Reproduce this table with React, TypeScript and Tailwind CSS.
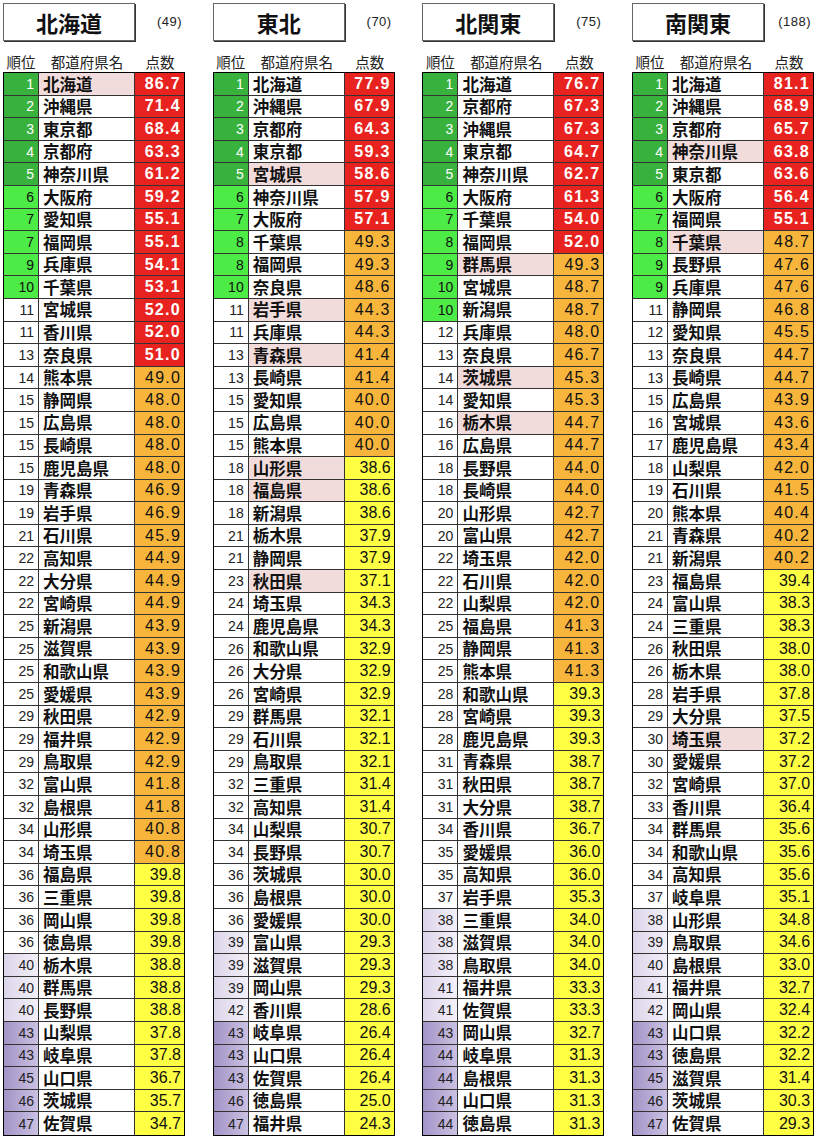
import React from 'react';

const rawData: { title: string; count: string; hl: string[]; rows: string }[] = [
  {
    title: '北海道',
    count: '(49)',
    hl: ['北海道'],
    rows: `1 北海道 86.7
2 沖縄県 71.4
3 東京都 68.4
4 京都府 63.3
5 神奈川県 61.2
6 大阪府 59.2
7 愛知県 55.1
7 福岡県 55.1
9 兵庫県 54.1
10 千葉県 53.1
11 宮城県 52.0
11 香川県 52.0
13 奈良県 51.0
14 熊本県 49.0
15 静岡県 48.0
15 広島県 48.0
15 長崎県 48.0
15 鹿児島県 48.0
19 青森県 46.9
19 岩手県 46.9
21 石川県 45.9
22 高知県 44.9
22 大分県 44.9
22 宮崎県 44.9
25 新潟県 43.9
25 滋賀県 43.9
25 和歌山県 43.9
25 愛媛県 43.9
29 秋田県 42.9
29 福井県 42.9
29 鳥取県 42.9
32 富山県 41.8
32 島根県 41.8
34 山形県 40.8
34 埼玉県 40.8
36 福島県 39.8
36 三重県 39.8
36 岡山県 39.8
36 徳島県 39.8
40 栃木県 38.8
40 群馬県 38.8
40 長野県 38.8
43 山梨県 37.8
43 岐阜県 37.8
45 山口県 36.7
46 茨城県 35.7
47 佐賀県 34.7`,
  },
  {
    title: '東北',
    count: '(70)',
    hl: ['宮城県', '岩手県', '青森県', '山形県', '福島県', '秋田県'],
    rows: `1 北海道 77.9
2 沖縄県 67.9
3 京都府 64.3
4 東京都 59.3
5 宮城県 58.6
6 神奈川県 57.9
7 大阪府 57.1
8 千葉県 49.3
8 福岡県 49.3
10 奈良県 48.6
11 岩手県 44.3
11 兵庫県 44.3
13 青森県 41.4
13 長崎県 41.4
15 愛知県 40.0
15 広島県 40.0
15 熊本県 40.0
18 山形県 38.6
18 福島県 38.6
18 新潟県 38.6
21 栃木県 37.9
21 静岡県 37.9
23 秋田県 37.1
24 埼玉県 34.3
24 鹿児島県 34.3
26 和歌山県 32.9
26 大分県 32.9
26 宮崎県 32.9
29 群馬県 32.1
29 石川県 32.1
29 鳥取県 32.1
32 三重県 31.4
32 高知県 31.4
34 山梨県 30.7
34 長野県 30.7
36 茨城県 30.0
36 島根県 30.0
36 愛媛県 30.0
39 富山県 29.3
39 滋賀県 29.3
39 岡山県 29.3
42 香川県 28.6
43 岐阜県 26.4
43 山口県 26.4
43 佐賀県 26.4
46 徳島県 25.0
47 福井県 24.3`,
  },
  {
    title: '北関東',
    count: '(75)',
    hl: ['群馬県', '茨城県', '栃木県'],
    rows: `1 北海道 76.7
2 京都府 67.3
3 沖縄県 67.3
4 東京都 64.7
5 神奈川県 62.7
6 大阪府 61.3
7 千葉県 54.0
8 福岡県 52.0
9 群馬県 49.3
10 宮城県 48.7
10 新潟県 48.7
12 兵庫県 48.0
13 奈良県 46.7
14 茨城県 45.3
14 愛知県 45.3
16 栃木県 44.7
16 広島県 44.7
18 長野県 44.0
18 長崎県 44.0
20 山形県 42.7
20 富山県 42.7
22 埼玉県 42.0
22 石川県 42.0
22 山梨県 42.0
25 福島県 41.3
25 静岡県 41.3
25 熊本県 41.3
28 和歌山県 39.3
28 宮崎県 39.3
28 鹿児島県 39.3
31 青森県 38.7
31 秋田県 38.7
31 大分県 38.7
34 香川県 36.7
35 愛媛県 36.0
35 高知県 36.0
37 岩手県 35.3
38 三重県 34.0
38 滋賀県 34.0
38 鳥取県 34.0
41 福井県 33.3
41 佐賀県 33.3
43 岡山県 32.7
44 岐阜県 31.3
44 島根県 31.3
44 山口県 31.3
44 徳島県 31.3`,
  },
  {
    title: '南関東',
    count: '(188)',
    hl: ['神奈川県', '千葉県', '埼玉県'],
    rows: `1 北海道 81.1
2 沖縄県 68.9
3 京都府 65.7
4 神奈川県 63.8
5 東京都 63.6
6 大阪府 56.4
7 福岡県 55.1
8 千葉県 48.7
9 長野県 47.6
9 兵庫県 47.6
11 静岡県 46.8
12 愛知県 45.5
13 奈良県 44.7
13 長崎県 44.7
15 広島県 43.9
16 宮城県 43.6
17 鹿児島県 43.4
18 山梨県 42.0
19 石川県 41.5
20 熊本県 40.4
21 青森県 40.2
21 新潟県 40.2
23 福島県 39.4
24 富山県 38.3
24 三重県 38.3
26 秋田県 38.0
26 栃木県 38.0
28 岩手県 37.8
29 大分県 37.5
30 埼玉県 37.2
30 愛媛県 37.2
32 宮崎県 37.0
33 香川県 36.4
34 群馬県 35.6
34 和歌山県 35.6
34 高知県 35.6
37 岐阜県 35.1
38 山形県 34.8
39 鳥取県 34.6
40 島根県 33.0
41 福井県 32.7
42 岡山県 32.4
43 山口県 32.2
43 徳島県 32.2
45 滋賀県 31.4
46 茨城県 30.3
47 佐賀県 29.3`,
  },
];

type Row = { r: number; n: string; v: string };

function parse(s: string): Row[] {
  return s
    .trim()
    .split('\n')
    .map((l) => {
      const [r, n, v] = l.trim().split(/\s+/);
      return { r: Number(r), n, v };
    });
}

function rankClass(r: number): string {
  if (r <= 5) return 'bg-[#38b23c] text-white';
  if (r <= 10) return 'bg-[#4deb45] text-[#111]';
  if (r >= 43) return 'bg-linear-to-r from-[#a394c7] to-[#cbc1e2] text-[#222]';
  if (r >= 38) return 'bg-linear-to-r from-[#dcd5ea] to-[#f3f0f8] text-[#222]';
  return 'bg-white text-[#222]';
}

function scoreClass(v: number): string {
  if (v >= 50) return 'bg-[#e8231f] text-white font-bold tracking-[1.3px]';
  if (v >= 40) return 'bg-[#f7b53c] text-[#111] tracking-[1.2px]';
  return 'bg-[#ffff44] text-[#111]';
}

function Region({ title, count, hl, rows }: { title: string; count: string; hl: string[]; rows: Row[] }) {
  return (
    <div className="w-[182px] flex flex-col">
      <div className="flex items-center justify-between h-[38px]">
        <div className="w-[132px] h-[38px] border-[1.5px] border-[#666] shadow-[1px_1px_0_#333] flex items-center justify-center text-[22px] font-bold leading-none text-[#111]">
          {title}
        </div>
        <div className="pr-[3px] text-[13px] tracking-[0.5px] font-['Liberation_Sans',Arial,sans-serif] text-[#222]">
          {count}
        </div>
      </div>
      <div className="mt-[11px] h-[20px] flex items-center text-[14.5px] leading-none text-[#222]">
        <div className="w-[36px] text-center">順位</div>
        <div className="w-[96px] text-center">都道府県名</div>
        <div className="flex-1 text-center">点数</div>
      </div>
      <div className="border-[1.5px] border-black">
        {rows.map((row, i) => (
          <div
            key={i}
            className="flex h-[22.6px] border-b border-[#333] last:border-b-0"
          >
            <div
              className={
                'w-[35px] border-r border-[#333] flex items-center justify-end pr-[4px] text-[14px] leading-none font-["Liberation_Sans",Arial,sans-serif] ' +
                rankClass(row.r)
              }
            >
              {row.r}
            </div>
            <div
              className={
                'w-[96px] border-r border-[#333] flex items-center pl-[4px] text-[16.5px] font-bold leading-none text-[#111] ' +
                (hl.includes(row.n) ? 'bg-[#f2dcdb]' : 'bg-white')
              }
            >
              {row.n}
            </div>
            <div
              className={
                'flex-1 flex items-center justify-end pr-[3px] text-[16px] leading-none font-["Liberation_Sans",Arial,sans-serif] ' +
                scoreClass(Number(row.v))
              }
            >
              {row.v}
            </div>
          </div>
        ))}
      </div>
    </div>
  );
}

export default function App() {
  return (
    <div className="w-[820px] h-[1142px] bg-white pt-[3px] pl-[3px] flex gap-[27.7px] font-['Noto_Sans_CJK_JP','Noto_Sans',sans-serif]">
      {rawData.map((d) => (
        <Region key={d.title} title={d.title} count={d.count} hl={d.hl} rows={parse(d.rows)} />
      ))}
    </div>
  );
}
